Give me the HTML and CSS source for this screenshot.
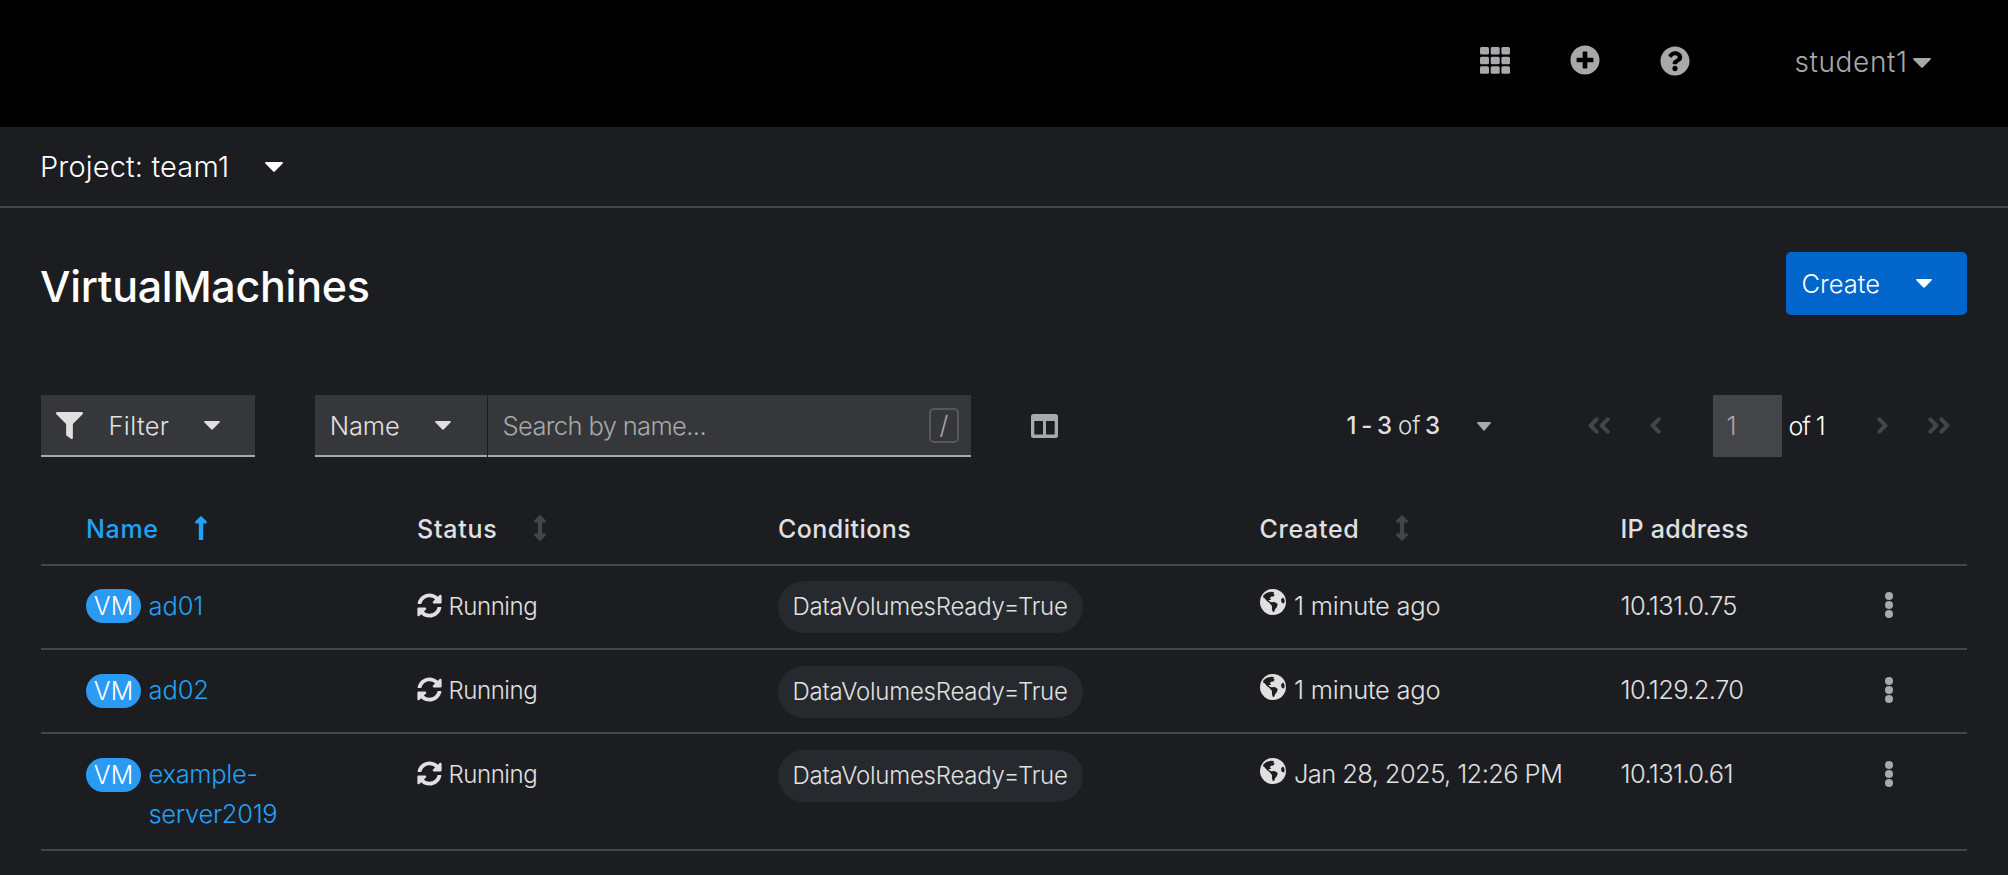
FILE: index.html
```html
<!DOCTYPE html>
<html lang="en">
<head>
<meta charset="utf-8">
<title>VirtualMachines</title>
<link rel="stylesheet" href="styles.css">
</head>
<body>
<svg class="defs" aria-hidden="true">
  <symbol id="caret" viewBox="0 0 18 10" preserveAspectRatio="none"><path d="M1 0H17Q18.6 .4 17.4 1.8L10 9.2Q9 10.200 8 9.200L.6 1.800Q-.6 .4 1 0Z"/></symbol>
  <symbol id="sync" viewBox="0 0 512 512"><path d="M370.720 133.280C339.458 104.008 298.888 87.962 255.848 88c-77.458.068-144.328 53.178-162.791 126.850-1.344 5.363-6.122 9.150-11.651 9.150H24.103c-7.498 0-13.194-6.807-11.807-14.176C33.933 94.924 134.813 8 256 8c66.448 0 126.791 26.136 171.315 68.685L463.030 40.970C478.149 25.851 504 36.559 504 57.941V192c0 13.255-10.745 24-24 24H345.941c-21.382 0-32.090-25.851-16.971-40.971l41.750-41.749zM32 296h134.059c21.382 0 32.090 25.851 16.971 40.971l-41.750 41.750c31.262 29.273 71.835 45.319 114.876 45.280 77.418-.07 144.315-53.144 162.787-126.849 1.344-5.363 6.122-9.150 11.651-9.150h57.304c7.498 0 13.194 6.807 11.807 14.176C478.067 417.076 377.187 504 256 504c-66.448 0-126.791-26.136-171.315-68.685L48.970 471.030C33.851 486.149 8 475.441 8 454.059V320c0-13.255 10.745-24 24-24z"/></symbol>
  <symbol id="globe" viewBox="0 0 76 76"><circle cx="38" cy="38" r="38"/><path class="land" d="M10 18L20 11L32 8L41 9L39 13L43 17L39 22L32 23L29 28L33 32L24 32L30 38L35 39L43 38L52 44L49 53L44 59L42 66L38 68L35 60L35 50L30 44L27 40L20 35L14 28L9 24ZM62 29L68 25L72 33L71 42L66 42L62 37Z"/></symbol>
  <symbol id="sort" viewBox="0 0 12 26"><path d="M5 .7Q6-.5 7 .7L11.700 5.500Q12.400 7.300 11 7.500H8.100V18.500H11Q12.400 18.700 11.700 20.500L7 25.300Q6 26.500 5 25.300L.3 20.500Q-.4 18.700 1 18.500H3.900V7.500H1Q-.4 7.300 .3 5.500Z"/></symbol>
  <symbol id="kebab" viewBox="0 0 8 26"><circle cx="4" cy="4" r="4"/><circle cx="4" cy="13" r="4"/><circle cx="4" cy="22" r="4"/></symbol>
  <symbol id="angle" viewBox="0 0 11 17"><path d="M8.600 2.300L2.600 8.500L8.600 14.700" fill="none" stroke="currentColor" stroke-width="4" stroke-linecap="round" stroke-linejoin="round"/></symbol>
</svg>

<header class="masthead">
  <svg class="apps" viewBox="0 0 30 27"><g><rect width="9" height="7.600" rx="1.500"/><rect x="10.700" width="9" height="7.600" rx="1.500"/><rect x="21.400" width="8.600" height="7.600" rx="1.500"/><rect y="9.700" width="9" height="7.600" rx="1.500"/><rect x="10.700" y="9.700" width="9" height="7.600" rx="1.500"/><rect x="21.400" y="9.700" width="8.600" height="7.600" rx="1.500"/><rect y="19.200" width="9" height="7.600" rx="1.500"/><rect x="10.700" y="19.200" width="9" height="7.600" rx="1.500"/><rect x="21.400" y="19.200" width="8.600" height="7.600" rx="1.500"/></g></svg>
  <svg class="plus" viewBox="0 0 512 512"><path d="M256 8C119 8 8 119 8 256s111 248 248 248 248-111 248-248S393 8 256 8zm144 276c0 6.600-5.400 12-12 12h-92v92c0 6.600-5.400 12-12 12h-56c-6.600 0-12-5.400-12-12v-92h-92c-6.600 0-12-5.400-12-12v-56c0-6.600 5.400-12 12-12h92v-92c0-6.600 5.400-12 12-12h56c6.600 0 12 5.400 12 12v92h92c6.600 0 12 5.400 12 12v56z"/></svg>
  <svg class="help" viewBox="0 0 512 512"><path d="M504 256c0 136.997-111.043 248-248 248S8 392.997 8 256C8 119.083 119.043 8 256 8s248 111.083 248 248zM262.655 90c-54.497 0-89.255 22.957-116.549 63.758-3.536 5.286-2.353 12.415 2.715 16.258l34.699 26.310c5.205 3.947 12.621 3.008 16.665-2.122 17.864-22.658 30.113-35.797 57.303-35.797 20.429 0 45.698 13.148 45.698 32.958 0 14.976-12.363 22.667-32.534 33.976C247.128 238.528 216 254.941 216 296v4c0 6.627 5.373 12 12 12h56c6.627 0 12-5.373 12-12v-1.333c0-28.462 83.186-29.647 83.186-106.667 0-58.002-60.165-102-116.531-102zM256 338c-25.365 0-46 20.635-46 46 0 25.364 20.635 46 46 46s46-20.636 46-46c0-25.365-20.635-46-46-46z"/></svg>
  <span class="user">student1</span><svg class="caret"><use href="#caret"/></svg>
</header>

<nav class="project"><span>Project: team1</span><svg class="caret"><use href="#caret"/></svg></nav>

<main>
  <div class="title-row">
    <h1>VirtualMachines</h1>
    <button class="create"><span>Create</span><svg class="caret"><use href="#caret"/></svg></button>
  </div>

  <div class="toolbar">
    <div class="control filter"><svg class="funnel" viewBox="0 0 512 512" preserveAspectRatio="none"><path d="M487.976 0H24.028C2.710 0-8.047 25.866 7.058 40.971L192 225.941V432c0 7.831 3.821 15.170 10.237 19.662l80 55.980C298.020 518.690 320 507.493 320 487.980V225.941l184.947-184.970C520.021 25.896 509.338 0 487.976 0z"/></svg><span>Filter</span><svg class="caret"><use href="#caret"/></svg></div>
    <div class="control attr"><span>Name</span><svg class="caret"><use href="#caret"/></svg></div>
    <div class="control search"><span>Search by name...</span><kbd>/</kbd></div>
    <svg class="columns" viewBox="0 0 27 24"><path fill-rule="evenodd" d="M2.500 0H24.500Q27 0 27 2.500V21.500Q27 24 24.500 24H2.500Q0 24 0 21.500V2.500Q0 0 2.500 0ZM3.300 7V20.500H12V7ZM15 7V20.500H23.700V7Z"/></svg>
    <div class="pager">
      <span class="range"><b>1 - 3</b><i>of</i><b>3</b></span>
      <svg class="caret"><use href="#caret"/></svg>
      <svg class="angle first"><use href="#angle"/></svg><svg class="angle"><use href="#angle"/></svg>
      <svg class="angle prev"><use href="#angle"/></svg>
      <span class="page">1</span><span class="of">of 1</span>
      <svg class="angle flip next"><use href="#angle"/></svg>
      <svg class="angle flip last"><use href="#angle"/></svg><svg class="angle flip"><use href="#angle"/></svg>
    </div>
  </div>

  <div class="table">
    <div class="row head">
      <div class="sorted"><span class="h-name">Name</span><svg class="up" viewBox="0 0 12 24"><path d="M5 .7Q6-.5 7 .7L11.700 5.500Q12.400 7.300 11 7.500H8.200V24H3.800V7.500H1Q-.4 7.300 .3 5.500Z"/></svg></div>
      <div><span class="h-status">Status</span><svg class="sort"><use href="#sort"/></svg></div>
      <div><span class="h-cond">Conditions</span></div>
      <div><span class="h-created">Created</span><svg class="sort"><use href="#sort"/></svg></div>
      <div><span class="h-ip">IP address</span></div>
      <div></div>
    </div>
    <div class="row">
      <div class="name"><span class="badge">VM</span><a>ad01</a></div>
      <div class="status"><svg><use href="#sync"/></svg><span>Running</span></div>
      <div><span class="pill">DataVolumesReady=True</span></div>
      <div class="created"><svg><use href="#globe"/></svg><span>1 minute ago</span></div>
      <div class="ip">10.131.0.75</div>
      <div class="actions"><svg><use href="#kebab"/></svg></div>
    </div>
    <div class="row lower">
      <div class="name"><span class="badge">VM</span><a>ad02</a></div>
      <div class="status"><svg><use href="#sync"/></svg><span>Running</span></div>
      <div><span class="pill">DataVolumesReady=True</span></div>
      <div class="created"><svg><use href="#globe"/></svg><span>1 minute ago</span></div>
      <div class="ip">10.129.2.70</div>
      <div class="actions"><svg><use href="#kebab"/></svg></div>
    </div>
    <div class="row lower tall">
      <div class="name"><span class="badge">VM</span><a>example-<br>server2019</a></div>
      <div class="status"><svg><use href="#sync"/></svg><span>Running</span></div>
      <div><span class="pill">DataVolumesReady=True</span></div>
      <div class="created"><svg><use href="#globe"/></svg><span class="date">Jan 28, 2025, 12:26 PM</span></div>
      <div class="ip">10.131.0.61</div>
      <div class="actions"><svg><use href="#kebab"/></svg></div>
    </div>
  </div>
</main>
</body>
</html>
```
FILE: styles.css
```css
* { box-sizing: border-box; }
body {
  margin: 0;
  height: 875px;
  overflow: hidden;
  background: #1c1d20;
  color: #e0e0e0;
  font: 300 25.5px/40px Inter, "Open Sans", sans-serif;
}
svg { display: block; flex: none; fill: currentColor; }
span, b, i, a { white-space: nowrap; }
.defs { position: absolute; width: 0; height: 0; }
.caret { width: 16px; height: 9px; }

.masthead {
  display: flex;
  align-items: flex-start;
  height: 127px;
  padding-left: 1480px;
  background: #000;
  color: #a8a9ab;
}
.apps { width: 30px; height: 27px; margin: 47px 60px 0 0; }
.plus { width: 30px; height: 30px; margin: 44.500px 60px 0 0; }
.help { width: 30px; height: 30px; margin: 45.500px 104.500px 0 0; }
.user { font-size: 28px; letter-spacing: .6px; margin-top: 42px; width: 118.500px; }
.masthead .caret { width: 18px; height: 10px; margin-top: 57.500px; }

.project {
  display: flex;
  align-items: center;
  height: 81px;
  padding: 0 0 0 40px;
  border-bottom: 2px solid #444548;
  color: #fff;
  font-size: 29px;
  letter-spacing: .15px;
}
.project span { width: 225px; }
.project .caret { width: 18px; height: 10px; }

main { padding: 0 41px; }
.title-row { display: flex; justify-content: space-between; padding-top: 44px; color: #fff; }
h1 { margin: 14px 0 0 -1px; font-size: 43px; font-weight: 500; line-height: 40px; letter-spacing: -.29px; }
.create {
  display: flex;
  align-items: center;
  width: 181px;
  height: 63px;
  padding: 0 0 0 15.500px;
  border: 0;
  border-radius: 5px;
  background: #06c;
  color: #fff;
  font: inherit;
}
.create span { width: 114.500px; text-align: left; }

.toolbar { display: flex; align-items: center; height: 62px; margin-top: 80px; }
.control {
  display: flex;
  align-items: center;
  height: 62px;
  background: #36373a;
  border-bottom: 2px solid #a8a9ab;
}
.control span { line-height: 42px; padding-top: 1px; }
.filter { width: 214px; margin-right: 60px; padding-left: 14.500px; }
.funnel { width: 27px; height: 27px; margin-right: 26px; }
.filter span { width: 95.500px; letter-spacing: .35px; }
.attr { width: 171.500px; margin-right: 1.500px; padding-left: 14.700px; }
.attr span { width: 105.500px; letter-spacing: -.11px; }
.search { width: 483px; padding: 0 12px 0 14.500px; justify-content: space-between; color: #a8a9ab; }
.search span { letter-spacing: -.63px; }
kbd {
  width: 30px;
  height: 35px;
  border: 2px solid #57585b;
  border-radius: 5px;
  font: inherit;
  line-height: 30px;
  text-align: center;
}
.columns { width: 27px; height: 24px; margin: -1px 0 0 60px; color: #a8a9ab; }
.pager { display: flex; align-items: center; margin-left: 288.500px; color: #444548; }
.range { display: flex; width: 130px; color: #e0e0e0; font-size: 24px; }
.range b { width: 52px; font-weight: 500; letter-spacing: -.84px; }
.range i { width: 27.500px; font-style: normal; }
.pager .caret { width: 14px; height: 9px; color: #a8a9ab; }
.angle { width: 11px; height: 17px; margin-top: -2px; }
.first { margin-left: 97px; }
.prev { margin-left: 40px; }
.flip { transform: scaleX(-1); }
.page { width: 69px; height: 62px; margin-left: 52px; padding-left: 14px; background: #444548; color: #a8a9ab; line-height: 62px; }
.of { width: 40px; margin-left: 7px; color: #fff; font-size: 25px; letter-spacing: -1.060px; }
.next { margin-left: 48px; }
.last { margin-left: 40px; }

.table { margin-top: 36px; }
.row {
  display: grid;
  grid-template-columns: 375px 361px 482.500px 361px 264px 1fr;
  height: 84px;
  border-bottom: 2px solid #444548;
}
.row > div { display: flex; align-items: flex-start; padding-top: 19.500px; }
.row > div:first-child { padding-left: 45px; }
.row.lower > div { padding-top: 20.200px; }
.row.tall { height: 117px; }
.head { height: 73px; font-size: 25px; font-weight: 500; }
.row.head > div { align-items: center; padding-top: 0; }
.sorted, .name a { color: #21a2f5; }
.h-name { width: 109px; letter-spacing: .66px; }
.h-status { width: 117px; margin-left: 1px; letter-spacing: .76px; }
.h-cond { margin-left: 1px; letter-spacing: .46px; }
.h-created { width: 136px; letter-spacing: .7px; }
.h-ip { letter-spacing: .27px; }
.up, .sort { width: 12px; height: 24px; margin-top: -1px; }
.sort { height: 26px; color: #444548; margin-top: -2px; }
.badge {
  width: 55px;
  height: 34px;
  margin: 3.500px 7.500px 0 0;
  border-radius: 17px;
  background: #2b9af3;
  color: #fff;
  font-size: 25px;
  line-height: 34.500px;
  text-align: center;
}
.name a { letter-spacing: -.1px; }
.tall .name a { letter-spacing: -.3px; }
.status { font-size: 24px; letter-spacing: -.44px; }
.status svg { width: 25px; height: 25px; margin: 6px 7px 0 0; }
.row > .status { padding-left: .5px; padding-top: 20.500px; }
.row.lower > .status { padding-top: 21px; }
.pill {
  height: 52px;
  margin: -4.500px 0 0 .5px;
  padding: 0 15px;
  border-radius: 26px;
  background: #26292d;
  font-size: 24px;
  line-height: 52px;
  letter-spacing: -.24px;
}
.created svg { width: 26px; height: 26px; margin: 3.500px 8.500px 0 0; }
.land { fill: #1c1d20; }
.created span { letter-spacing: -.25px; }
.created .date { letter-spacing: -.6px; }
.ip { letter-spacing: -.63px; }
.actions svg { width: 8px; height: 26px; margin-top: 6.500px; color: #a8a9ab; }
```
